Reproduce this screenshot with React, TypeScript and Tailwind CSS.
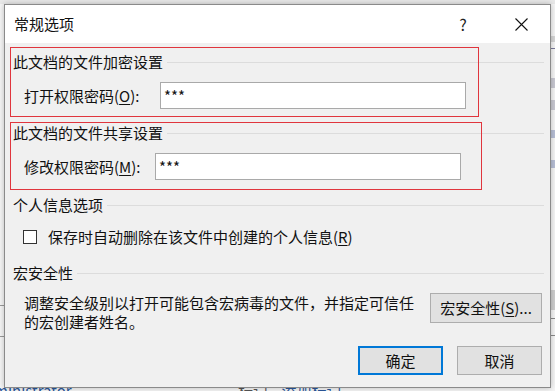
import React from "react";

function SectionHeader({ children }: { children: React.ReactNode }) {
  return (
    <div className="flex items-center h-[20px]">
      <span className="leading-[20px] whitespace-nowrap">{children}</span>
      <div className="flex-1 h-px bg-[#dcdcdc] ml-[4px]" />
    </div>
  );
}

export default function App() {
  return (
    <div className="relative w-[555px] h-[391px] overflow-hidden bg-[#f6f6f6] font-['Noto_Sans_CJK_SC','Microsoft_YaHei',sans-serif] text-[15px] text-[#111]">
      {/* backdrop (Word window behind) */}
      <div className="absolute left-0 top-0 w-[555px] h-[4px] bg-[#e9e9e9]" />
      <div className="absolute left-0 top-[305px] w-[4px] h-px bg-[#9a9a9a]" />
      <div className="absolute left-0 top-[336px] w-[4px] h-px bg-[#9a9a9a]" />
      <div className="absolute left-[551px] top-[36px] w-[4px] h-[6px] bg-[#d6d6d6]" />
      <div className="absolute left-[551px] top-[48px] w-[4px] h-px bg-[#7a7a9a]" />
      <div className="absolute left-[551px] top-[78px] w-[4px] h-[10px] bg-[#c9c9d2]" />
      <div className="absolute left-[551px] top-[100px] w-[4px] h-[10px] bg-[#c9c9d2]" />
      <div className="absolute left-[551px] top-[130px] w-[4px] h-[8px] bg-[#b8bfd6]" />
      <div className="absolute left-[551px] top-[160px] w-[4px] h-[8px] bg-[#b8bfd6]" />
      <div className="absolute left-[551px] top-[290px] w-[4px] h-[20px] bg-[#cfcfcf]" />
      <div className="absolute left-[551px] top-[318px] w-[4px] h-px bg-[#8a8a8a]" />
      <div className="absolute left-[551px] top-[335px] w-[4px] h-px bg-[#8a8a8a]" />
      <div className="absolute left-[-6px] top-[381px] leading-[20px] text-[#2b579a] whitespace-nowrap">ministrator</div>
      <div className="absolute left-[238px] top-[381px] leading-[20px] text-[#555] whitespace-nowrap">
        标记 <span className="ml-[10px] text-[#2b579a]">添加标记</span>
      </div>

      {/* dialog */}
      <div className="absolute left-[4px] top-[4px] w-[547px] h-[384px] border border-[#8a8a8a] bg-[#f0f0f0] flex flex-col shadow-[0_0_6px_rgba(0,0,0,0.25)]">
        {/* title bar */}
        <div className="h-[38px] bg-white flex items-center pl-[9px]">
          <span className="leading-[20px]">常规选项</span>
          <div className="ml-auto flex items-center">
            <div className="w-[46px] h-[38px] flex items-center justify-center text-[16px] text-[#222] mr-[12px]">?</div>
            <div className="w-[46px] h-[38px] flex items-center justify-center mr-[6px]">
              <svg width="13" height="13" viewBox="0 0 13 13">
                <path d="M0.5 0.5 L12.5 12.5 M12.5 0.5 L0.5 12.5" stroke="#111" strokeWidth="1.1" fill="none" />
              </svg>
            </div>
          </div>
        </div>

        {/* content */}
        <div className="relative flex-1 flex flex-col pl-2 pr-[6px] pt-[9px] pb-[12px]">
          {/* red annotation boxes */}
          <div className="absolute left-[5px] top-[4px] w-[469px] h-[70px] border border-[#e0353d] pointer-events-none" />
          <div className="absolute left-[5px] top-[79px] w-[472px] h-[68px] border border-[#e0353d] pointer-events-none" />

          <SectionHeader>此文档的文件加密设置</SectionHeader>
          <div className="flex items-center mt-[10px] ml-[11px]">
            <span className="w-[136px] leading-[20px] whitespace-nowrap">
              打开权限密码(<span className="underline underline-offset-2">O</span>):
            </span>
            <div className="w-[306px] h-[27px] bg-white border border-[#a9a9a9] flex items-center pl-[3px] leading-[20px]">***</div>
          </div>

          <div className="mt-[14px]">
            <SectionHeader>此文档的文件共享设置</SectionHeader>
          </div>
          <div className="flex items-center mt-[10px] ml-[11px]">
            <span className="w-[131px] leading-[20px] whitespace-nowrap">
              修改权限密码(<span className="underline underline-offset-2">M</span>):
            </span>
            <div className="w-[306px] h-[27px] bg-white border border-[#a9a9a9] flex items-center pl-[3px] leading-[20px]">***</div>
          </div>

          <div className="mt-[15px]">
            <SectionHeader>个人信息选项</SectionHeader>
          </div>
          <div className="flex items-center mt-[12px] ml-[10px] h-[20px]">
            <div className="w-[14px] h-[14px] bg-white border border-[#333]" />
            <span className="ml-[11px] leading-[20px] whitespace-nowrap">
              保存时自动删除在该文件中创建的个人信息(<span className="underline underline-offset-2">R</span>)
            </span>
          </div>

          <div className="mt-[16px]">
            <SectionHeader>宏安全性</SectionHeader>
          </div>
          <div className="flex items-start mt-[10px]">
            <p className="ml-[11px] leading-[19px] whitespace-nowrap">
              调整安全级别以打开可能包含宏病毒的文件，并指定可信任
              <br />
              的宏创建者姓名。
            </p>
            <div className="ml-auto mr-[2px] w-[112px] h-[30px] bg-[#e1e1e1] border border-[#adadad] flex items-center justify-center leading-[20px] whitespace-nowrap">
              宏安全性(<span className="underline underline-offset-2">S</span>)...
            </div>
          </div>

          <div className="mt-auto flex justify-end gap-[14px] mr-[2px]">
            <div className="w-[85px] h-[29px] bg-[#e1e1e1] border-2 border-[#0078d7] flex items-center justify-center leading-[20px]">确定</div>
            <div className="w-[85px] h-[29px] bg-[#e1e1e1] border border-[#adadad] flex items-center justify-center leading-[20px]">取消</div>
          </div>
        </div>
      </div>
    </div>
  );
}
